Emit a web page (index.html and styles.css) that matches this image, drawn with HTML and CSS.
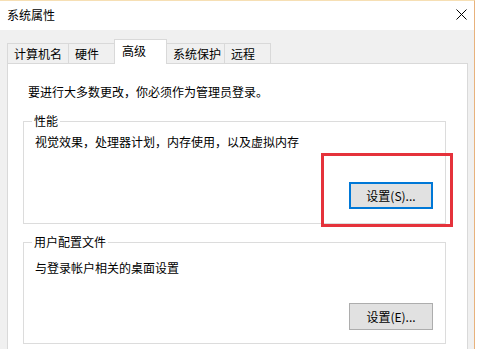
FILE: index.html
```html
<!DOCTYPE html>
<html lang="zh-CN">
    <head>
        <meta charset="UTF-8">
        <title>系统属性</title>
        <link rel="stylesheet" href="styles.css">
    </head>
    <body>
        <div class="window">
            <div class="titlebar">
                <span class="title">系统属性</span>
                <svg class="close" width="11" height="11" viewBox="0 0 11 11">
                    <path d="M0.5 0.5 L10.5 10.5 M10.5 0.5 L0.5 10.5" stroke="#000" stroke-width="1" fill="none"/>
                </svg>
            </div>
            <div class="tabs">
                <div class="tab tab-name">计算机名</div>
                <div class="tab tab-hw">硬件</div>
                <div class="tab tab-adv active">高级</div>
                <div class="tab tab-prot">系统保护</div>
                <div class="tab tab-remote">远程</div>
            </div>
            <div class="panel">
                <p class="notice">要进行大多数更改，你必须作为管理员登录。</p>

                <fieldset class="group group-perf">
                    <legend>性能</legend>
                    <p class="desc">视觉效果，处理器计划，内存使用，以及虚拟内存</p>
                    <div class="actions">
                        <div class="btn-wrap">
                            <button class="btn btn-default">设置(S)...</button>
                            <div class="highlight"></div>
                        </div>
                    </div>
                </fieldset>

                <fieldset class="group group-profile">
                    <legend>用户配置文件</legend>
                    <p class="desc">与登录帐户相关的桌面设置</p>
                    <div class="actions">
                        <button class="btn">设置(E)...</button>
                    </div>
                </fieldset>
            </div>
        </div>
    </body>
</html>
```

FILE: styles.css
```css
body {
    margin: 0;
    background-color: #fff;
    font-family: "Noto Sans CJK SC", "Microsoft YaHei", sans-serif;
    font-size: 12px;
    line-height: 16px;
    color: #000;
}

.window {
    width: 475px;
    height: 349px;
    overflow: hidden;
    box-sizing: border-box;
    background-color: #f0f0f0;
    border-top: 1px solid #f6dfb4;
    border-right: 1px solid #e8b27c;
}

.titlebar {
    height: 29px;
    background-color: #fff;
    display: flex;
    align-items: center;
    justify-content: space-between;
    padding: 0 7px 0 7px;
}

.title {
    padding-bottom: 1px;
}

.close {
    margin-bottom: 2px;
}

.tabs {
    display: flex;
    align-items: flex-end;
    margin-top: 9px;
    padding-left: 7px;
    height: 24px;
}

.tab {
    box-sizing: border-box;
    height: 20px;
    line-height: 19px;
    padding-left: 6px;
    border: 1px solid #d9d9d9;
    border-bottom: none;
    margin-right: -1px;
    background-color: #f0f0f0;
    white-space: nowrap;
}

.tab-name { width: 62px; }
.tab-hw { width: 47px; }
.tab-adv { width: 53px; }
.tab-prot { width: 59px; }
.tab-remote { width: 47px; }

.tab.active {
    position: relative;
    z-index: 1;
    height: 25px;
    margin-bottom: -1px;
    padding-left: 7px;
    line-height: 21px;
    background-color: #fff;
}

.panel {
    box-sizing: border-box;
    margin-left: 7px;
    width: 461px;
    height: 300px;
    background-color: #fff;
    border: 1px solid #d9d9d9;
    padding: 20px 21px 0 15px;
}

.notice {
    margin: 0 0 13px 5px;
}

.group {
    margin: 0;
    padding: 0 12px 0 11px;
    border: 1px solid #dcdcdc;
    min-width: 0;
}

.group legend {
    margin-left: -3px;
    padding: 0 2px;
}

.desc {
    margin: 0;
}

.group-perf .desc {
    margin-top: 5px;
}

.group-perf .actions {
    margin-top: 32px;
    padding-bottom: 14px;
}

.group-profile {
    margin-top: 10px;
}

.group-profile .desc {
    margin-top: 10px;
}

.group-profile .actions {
    margin-top: 27px;
    padding-bottom: 13px;
}

.actions {
    display: flex;
    justify-content: flex-end;
}

.btn-wrap {
    position: relative;
}

.btn {
    display: block;
    box-sizing: border-box;
    width: 84px;
    height: 27px;
    font-family: inherit;
    font-size: 12px;
    color: #000;
    background-color: #e1e1e1;
    border: 1px solid #adadad;
    padding: 0;
}

.btn-default {
    border: 2px solid #0078d7;
}

.highlight {
    position: absolute;
    top: -29px;
    right: -20px;
    bottom: -18px;
    left: -28px;
    border: 3px solid #e5323b;
    pointer-events: none;
}
```
